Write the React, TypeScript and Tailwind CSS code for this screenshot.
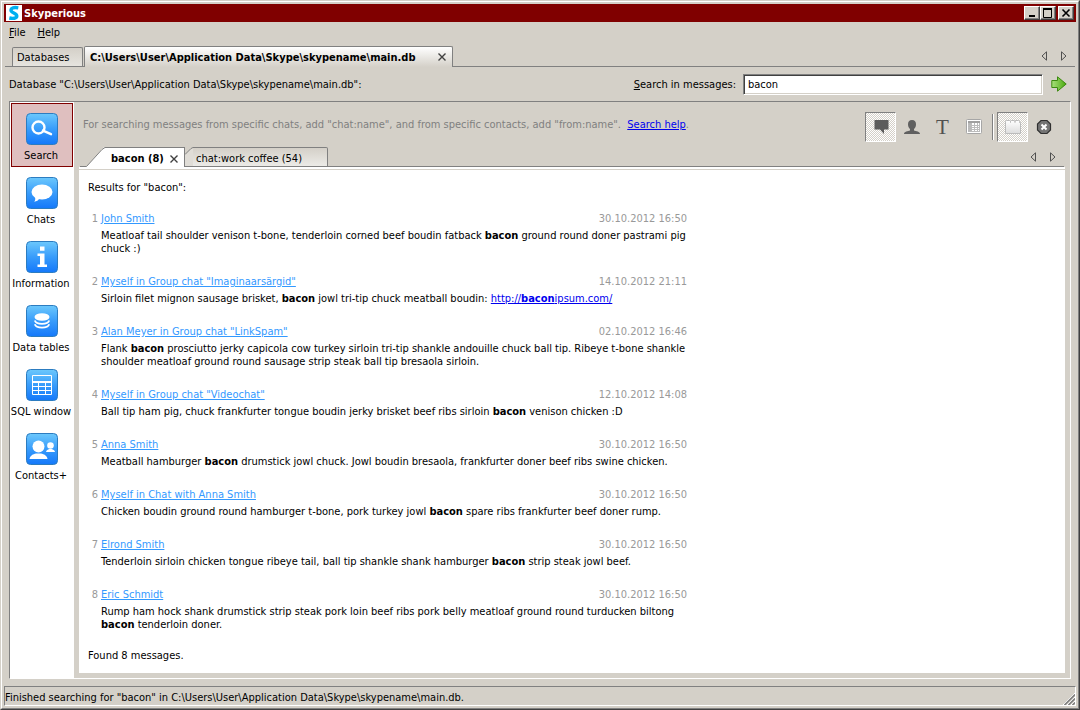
import { Fragment, useState } from 'react'
import type { ReactNode } from 'react'

interface Result {
  title: string
  date: string
  lines: string[]
}

const RESULTS: Result[] = [
  {
    title: 'John Smith',
    date: '30.10.2012 16:50',
    lines: [
      'Meatloaf tail shoulder venison t-bone, tenderloin corned beef boudin fatback *bacon* ground round doner pastrami pig',
      'chuck :)',
    ],
  },
  {
    title: 'Myself in Group chat "Imaginaarsärgid"',
    date: '14.10.2012 21:11',
    lines: ['Sirloin filet mignon sausage brisket, *bacon* jowl tri-tip chuck meatball boudin: http://baconipsum.com/'],
  },
  {
    title: 'Alan Meyer in Group chat "LinkSpam"',
    date: '02.10.2012 16:46',
    lines: [
      'Flank *bacon* prosciutto jerky capicola cow turkey sirloin tri-tip shankle andouille chuck ball tip. Ribeye t-bone shankle',
      'shoulder meatloaf ground round sausage strip steak ball tip bresaola sirloin.',
    ],
  },
  {
    title: 'Myself in Group chat "Videochat"',
    date: '12.10.2012 14:08',
    lines: ['Ball tip ham pig, chuck frankfurter tongue boudin jerky brisket beef ribs sirloin *bacon* venison chicken :D'],
  },
  {
    title: 'Anna Smith',
    date: '30.10.2012 16:50',
    lines: ['Meatball hamburger *bacon* drumstick jowl chuck. Jowl boudin bresaola, frankfurter doner beef ribs swine chicken.'],
  },
  {
    title: 'Myself in Chat with Anna Smith',
    date: '30.10.2012 16:50',
    lines: ['Chicken boudin ground round hamburger t-bone, pork turkey jowl *bacon* spare ribs frankfurter beef doner rump.'],
  },
  {
    title: 'Elrond Smith',
    date: '30.10.2012 16:50',
    lines: ['Tenderloin sirloin chicken tongue ribeye tail, ball tip shankle shank hamburger *bacon* strip steak jowl beef.'],
  },
  {
    title: 'Eric Schmidt',
    date: '30.10.2012 16:50',
    lines: [
      'Rump ham hock shank drumstick strip steak pork loin beef ribs pork belly meatloaf ground round turducken biltong',
      '*bacon* tenderloin doner.',
    ],
  },
]

function Rich({ text }: { text: string }) {
  return text.split(/(\*bacon\*|http:\/\/baconipsum\.com\/)/).map((part, i) => {
    if (part === '*bacon*') return <b key={i}>bacon</b>
    if (part.startsWith('http')) {
      return (
        <a key={i} href={part} className="text-[#0000ee] underline">
          http://<b>bacon</b>ipsum.com/
        </a>
      )
    }
    return <Fragment key={i}>{part}</Fragment>
  })
}

function Close() {
  return (
    <svg width="8" height="8" viewBox="0 0 8 8" stroke="#404040" strokeWidth="1.4">
      <path d="M.5 .5l7 7M7.5 .5l-7 7" />
    </svg>
  )
}

function Arrows() {
  return (
    <div className="flex gap-3">
      <button type="button" aria-label="Previous tab">
        <svg width="7" height="10" viewBox="0 0 7 10" fill="none" stroke="#505050">
          <path d="M5.5 .8v8.4L1 5z" />
        </svg>
      </button>
      <button type="button" aria-label="Next tab">
        <svg width="7" height="10" viewBox="0 0 7 10" fill="none" stroke="#505050">
          <path d="M1.5 .8v8.4L6 5z" />
        </svg>
      </button>
    </div>
  )
}

const SECTIONS: { label: string; art: ReactNode }[] = [
  {
    label: 'Search',
    art: (
      <>
        <circle cx="12.5" cy="14.5" r="6" fill="none" stroke="#fff" strokeWidth="2.4" />
        <path d="M17 17.6l8 3.6" stroke="#fff" strokeWidth="2.4" strokeLinecap="round" />
      </>
    ),
  },
  {
    label: 'Chats',
    art: (
      <>
        <ellipse cx="16" cy="15" rx="10.5" ry="7.5" fill="#fff" />
        <path d="M9 20c.5 2 .3 3.5-.8 4.8 2.5-.4 4.3-1.600 5-3.300z" fill="#fff" />
      </>
    ),
  },
  {
    label: 'Information',
    art: <path d="M14 5.500h4.500v4.300H14zM11.500 12.500H18.500v11h2.500V26h-9.500v-2.500H14v-8.500h-2.500z" fill="#fff" />,
  },
  {
    label: 'Data tables',
    art: (
      <>
        <ellipse cx="16" cy="12" rx="7.500" ry="3.800" fill="#fff" />
        <path
          d="M8.800 15.500c1.500 4.400 12.900 4.400 14.400 0M8.800 19.300c1.500 4.400 12.900 4.400 14.400 0"
          fill="none"
          stroke="#fff"
          strokeWidth="1.800"
        />
      </>
    ),
  },
  {
    label: 'SQL window',
    art: (
      <path
        d="M6.500 6.500h19v19h-19zM6.500 12.500h19M7 13.500h18M6.500 17.500h19M6.500 21.500h19M12.500 13v12.500M19.500 13v12.500"
        fill="none"
        stroke="#fff"
      />
    ),
  },
  {
    label: 'Contacts+',
    art: (
      <g fill="#fff">
        <circle cx="12.500" cy="13.500" r="6" />
        <path d="M3.500 26c.5-3.500 3.500-4.800 6.500-5.500h5c3 .7 6 2 6.500 5.500z" />
        <circle cx="24.500" cy="12.500" r="3.300" />
        <path d="M20 19c.4-1.800 1.800-2.600 3.300-3h2.400c1.500.4 2.900 1.200 3.300 3z" />
      </g>
    ),
  },
]

function Sidebar() {
  const [current, setCurrent] = useState('Search')
  return (
    <nav className="w-16 shrink-0 bg-white p-px">
      {SECTIONS.map((s) => (
        <button
          key={s.label}
          type="button"
          onClick={() => setCurrent(s.label)}
          className={`flex h-16 w-full flex-col items-center gap-1 border pt-[9px] whitespace-nowrap ${
            current === s.label ? 'border-[#800000] bg-[#dfbfbf]' : 'border-transparent'
          }`}
        >
          <svg width="32" height="32" viewBox="0 0 32 32" className="shrink-0">
            <defs>
              <linearGradient id="tile" x1="0" y1="0" x2="0" y2="1">
                <stop offset="0" stopColor="#6cc8fc" />
                <stop offset=".5" stopColor="#389cfb" />
                <stop offset="1" stopColor="#1478fa" />
              </linearGradient>
            </defs>
            <rect x=".5" y=".5" width="31" height="31" rx="4" fill="url(#tile)" stroke="#2c7cc0" />
            {s.art}
          </svg>
          <span className="mr-0.5">{s.label}</span>
        </button>
      ))}
    </nav>
  )
}

function Tool({ label, on, children }: { label: string; on?: boolean; children: ReactNode }) {
  return (
    <button
      type="button"
      aria-label={label}
      aria-pressed={on}
      className={`flex h-[30px] w-[31px] items-center justify-center border ${
        on
          ? 'border-t-[#808080] border-r-white border-b-white border-l-[#808080] bg-[repeating-conic-gradient(#fff_0_25%,#d4d0c8_0_50%)] bg-[length:2px_2px]'
          : 'border-transparent'
      }`}
    >
      {children}
    </button>
  )
}

function Toolbar() {
  return (
    <div className="flex items-center">
      <Tool label="Search in message body" on>
        <svg width="16" height="16" viewBox="0 0 16 16" fill="#5c5c5c">
          <path d="M1.500 1h14v9.500h-4.500v4.500L7 10.500H1.500z" />
        </svg>
      </Tool>
      <Tool label="Search in contacts">
        <svg width="16" height="16" viewBox="0 0 16 16" fill="#606060">
          <path d="M8 1c2.800 0 4 1.800 4 4.300S11 9.200 10 10v1.500c2 .9 6 .8 6 3.500H0c0-2.700 4-2.600 6-3.500V10C5 9.200 4 7.800 4 5.300S5.200 1 8 1z" />
        </svg>
      </Tool>
      <Tool label="Search in chat titles">
        <span className="font-['Liberation_Serif',serif] text-[21px] leading-4 text-[#505050]">T</span>
      </Tool>
      <Tool label="Search in tables">
        <svg width="16" height="16" viewBox="0 0 16 16">
          <rect x=".5" y=".5" width="15" height="14" rx="1" fill="#fff" stroke="#a6a6a6" />
          <path d="M2 2h12v2H2z" fill="#a0a0a0" />
          <path d="M2 4h3v9H2z" fill="#b8b8b8" />
          <path d="M2 6.500h12M2 8.500h12M2 10.500h12M2 12.500h12M5.500 4v9M8.500 4v9M11.500 4v9M13.500 4v9" stroke="#bcbcbc" />
        </svg>
      </Tool>
      <div className="mx-[3px] h-[26px] w-0.5 border-l border-[#808080] bg-white" />
      <Tool label="New tab for each search" on>
        <svg width="16" height="16" viewBox="0 0 16 16">
          <defs>
            <linearGradient id="folder" x1="0" y1="0" x2="0" y2="1">
              <stop offset="0" stopColor="#fff" />
              <stop offset="1" stopColor="#dcdcdc" />
            </linearGradient>
          </defs>
          <path
            d="M.5 14.500v-12q0-1 1-1h3q1 0 1 1v1V2.500q0-1 1-1h2.500q1 0 1 1v1V2.500q0-1 1-1h2.500q1 0 1 1v1h1v11z"
            fill="url(#folder)"
            stroke="#bbb"
          />
        </svg>
      </Tool>
      <Tool label="Stop">
        <svg width="16" height="16" viewBox="0 0 16 16">
          <path d="M5 1.500h6L14.500 5v6L11 14.500H5L1.500 11V5z" fill="#747474" stroke="#303030" strokeWidth="1.200" />
          <path d="M5.500 5.500l5 5M10.500 5.500l-5 5" stroke="#fff" strokeWidth="2" />
        </svg>
      </Tool>
    </div>
  )
}

function SearchTabs() {
  return (
    <div className="flex h-5 items-stretch px-px">
      <button type="button" className="flex">
        <svg width="26" height="20" viewBox="0 0 26 20">
          <path d="M6 20L23.500 .5H26V20z" fill="#fff" />
          <path d="M0 19.500h6.500L22 2.500l3-2h1" fill="none" stroke="#808080" />
        </svg>
        <span className="flex h-5 w-[79px] items-center gap-1.5 border-t border-r border-[#808080] bg-white pt-0.5 pl-[5px] font-bold whitespace-nowrap">
          bacon (8)
          <Close />
        </span>
      </button>
      <button type="button" className="flex">
        <svg width="8" height="20" viewBox="0 0 8 20">
          <path d="M0 20V7.500L7 .5H8V20z" fill="#e0ddd7" />
          <path d="M0 7.500L6 1.500L8 .5M0 19.500h8" fill="none" stroke="#808080" />
        </svg>
        <span className="flex h-5 w-[135px] items-center rounded-tr-xs border-t border-r border-b border-[#808080] bg-linear-to-b from-[#d4d0c8] to-[#ecebe7] pt-0.5 pl-[3px] whitespace-nowrap">
          chat:work coffee (54)
        </span>
      </button>
      <div className="flex flex-1 items-center justify-end border-b border-[#808080] pr-2">
        <Arrows />
      </div>
    </div>
  )
}

function Results() {
  return (
    <div className="flex-1 bg-white px-[9px] pt-[11px]">
      <p>Results for "bacon":</p>
      <ol className="mt-[18px] flex w-[599px] max-w-full flex-col gap-5">
        {RESULTS.map((r, i) => (
          <li key={r.title}>
            <div className="flex">
              <span className="w-[10px] text-right text-[#999]">{i + 1}</span>
              <a href={`#message-${i + 1}`} className="ml-[3px] text-[#3399ff] underline">
                {r.title}
              </a>
              <span className="ml-auto text-[#999]">{r.date}</span>
            </div>
            <p className="mt-1 ml-[13px] whitespace-nowrap">
              {r.lines.map((line, n) => (
                <Fragment key={n}>
                  {n > 0 && <br />}
                  <Rich text={line} />
                </Fragment>
              ))}
            </p>
          </li>
        ))}
      </ol>
      <p className="mt-[18px]">Found 8 messages.</p>
    </div>
  )
}

function WinButton({ label, children }: { label: string; children: ReactNode }) {
  return (
    <button
      type="button"
      aria-label={label}
      className="flex h-3.5 w-4 items-center justify-center border border-t-white border-r-[#404040] border-b-[#404040] border-l-white bg-[#d4d0c8] shadow-[inset_-1px_-1px_#808080]"
    >
      <svg width="10" height="10" viewBox="0 0 10 10" fill="none" stroke="#000">
        {children}
      </svg>
    </button>
  )
}

export default function App() {
  const [query, setQuery] = useState('bacon')
  return (
    <div className="flex min-h-screen flex-col border border-t-[#d4d0c8] border-r-[#404040] border-b-[#404040] border-l-[#d4d0c8] bg-[#d4d0c8] font-['DejaVu_Sans_Condensed','DejaVu_Sans',sans-serif] text-[11px] leading-[13px] text-black">
      <div className="flex flex-1 flex-col border border-t-white border-r-[#808080] border-b-[#808080] border-l-white p-0.5">
        <header className="flex h-[18px] items-center bg-[#800000] px-0.5">
          <svg width="16" height="16" viewBox="0 0 16 16">
            <path d="M0 0h16v16H0z" fill="#fff" />
            <path
              d="M12.300 2.800C8 2 5 2.800 5 5.200c0 2.800 5.800 2.800 5.800 5.800 0 2.500-3.800 2.800-7.500 2"
              fill="none"
              stroke="#00aff0"
              strokeWidth="3.400"
            />
          </svg>
          <h1 className="ml-0.5 font-bold text-white">Skyperious</h1>
          <div className="ml-auto flex">
            <WinButton label="Minimize">
              <path d="M2 8h6" strokeWidth="2" />
            </WinButton>
            <WinButton label="Maximize">
              <path d="M.5 1v8.500h8V1" />
              <path d="M0 1h9" strokeWidth="2" />
            </WinButton>
            <div className="w-0.5" />
            <WinButton label="Close">
              <path d="M1.500 1.500l7 7M8.500 1.500l-7 7" strokeWidth="1.600" />
            </WinButton>
          </div>
        </header>

        <div className="flex h-6 items-start gap-3 pt-1 pl-[5px]">
          <button type="button">
            <u>F</u>ile
          </button>
          <button type="button">
            <u>H</u>elp
          </button>
        </div>

        <div className="flex h-[21px] items-stretch px-px">
          <div className="w-[7px] border-b border-[#808080]" />
          <div className="flex border-b border-[#808080]">
            <button
              type="button"
              className="mt-px w-[71px] rounded-t-xs border-x border-t border-[#808080] bg-linear-to-b from-[#d4d0c8] to-[#e6e4df] pl-1 text-left"
            >
              Databases
            </button>
            <div className="w-px" />
          </div>
          <button
            type="button"
            className="flex min-w-[369px] items-center justify-between gap-1.5 rounded-t-xs border-x border-t border-[#808080] bg-linear-to-b from-white to-[#d4d0c8] pr-1.5 pl-[5px] font-bold whitespace-nowrap"
          >
            C:\Users\User\Application Data\Skype\skypename\main.db
            <Close />
          </button>
          <div className="flex flex-1 items-center justify-end border-b border-[#808080] pr-2">
            <Arrows />
          </div>
        </div>

        <main className="flex flex-1 flex-col px-[5px] pb-[7px]">
          <form className="flex h-[34px] items-center pr-1" onSubmit={(e) => e.preventDefault()}>
            <span>Database "C:\Users\User\Application Data\Skype\skypename\main.db":</span>
            <label htmlFor="query" className="ml-auto">
              <u>S</u>earch in messages:
            </label>
            <input
              id="query"
              value={query}
              onChange={(e) => setQuery(e.target.value)}
              className="ml-[7px] h-[21px] w-75 border border-t-[#808080] border-r-white border-b-white border-l-[#808080] bg-white px-1 shadow-[inset_1px_1px_#404040,inset_-1px_-1px_#d4d0c8] outline-none"
            />
            <button type="submit" aria-label="Search" className="ml-2">
              <svg width="16" height="16" viewBox="0 0 16 16">
                <defs>
                  <linearGradient id="go" x1="0" y1="0" x2="1" y2="0">
                    <stop offset="0" stopColor="#a8e07c" />
                    <stop offset="1" stopColor="#4aa80e" />
                  </linearGradient>
                </defs>
                <path d="M.8 4.500h5.700V.8L15.200 8l-8.700 7.200v-3.700H.8z" fill="url(#go)" stroke="#3c8a10" />
              </svg>
            </button>
          </form>

          <div className="flex flex-1 border border-t-[#808080] border-r-white border-b-white border-l-[#808080]">
            <Sidebar />
            <section className="flex min-w-0 flex-1 flex-col px-[5px] pb-[5px]">
              <div className="flex h-[45px] items-center pt-1 pr-1.5 pl-1">
                <p className="mb-1 whitespace-pre text-[#808080]">
                  {'For searching messages from specific chats, add "chat:name", and from specific contacts, add "from:name".  '}
                  <a href="#help" className="text-[#0000ee] underline">
                    Search help
                  </a>
                  .
                </p>
                <div className="ml-auto">
                  <Toolbar />
                </div>
              </div>
              <SearchTabs />
              <div className="h-[3px] border-b border-[#d4d0c8] bg-white" />
              <Results />
            </section>
          </div>
        </main>

        <footer className="flex h-5 items-center border border-t-[#808080] border-r-white border-b-white border-l-[#808080]">
          <span className="pt-0.5">
            Finished searching for "bacon" in C:\Users\User\Application Data\Skype\skypename\main.db.
          </span>
          <svg width="12" height="12" viewBox="0 0 12 12" className="mt-auto ml-auto">
            <path d="M0 12L12 0M4 12l8-8M8 12l4-4" stroke="#fff" />
            <path d="M1.500 12L12 1.500M5.500 12L12 5.500M9.500 12l2.500-2.500" stroke="#808080" strokeWidth="1.600" />
          </svg>
        </footer>
      </div>
    </div>
  )
}
